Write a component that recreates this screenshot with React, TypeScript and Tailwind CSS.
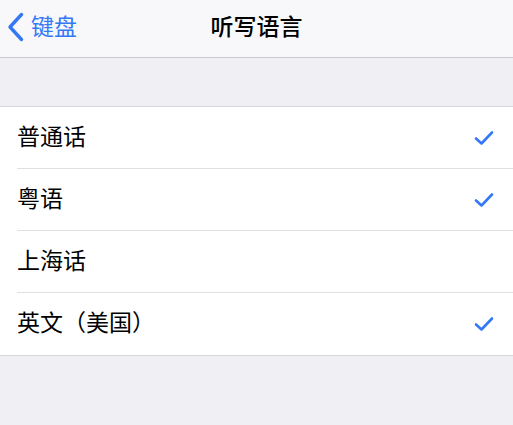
const languages = [
  { name: "普通话", checked: true },
  { name: "粤语", checked: true },
  { name: "上海话", checked: false },
  { name: "英文（美国）", checked: true },
];

function BackChevron() {
  return (
    <svg width="19" height="30" viewBox="0 0 19 30" fill="none">
      <path
        d="M15.5 2.5 L4 15 L15.5 27.5"
        stroke="#3478f6"
        strokeWidth="3.4"
        strokeLinecap="round"
        strokeLinejoin="round"
      />
    </svg>
  );
}

function Check() {
  return (
    <svg width="20" height="16" viewBox="0 0 20 16" fill="none">
      <path
        d="M2 8.5 L7.5 13.5 L18 2.5"
        stroke="#3478f6"
        strokeWidth="2.6"
        strokeLinecap="round"
        strokeLinejoin="round"
      />
    </svg>
  );
}

export default function App() {
  return (
    <div
      className="flex h-[425px] w-[513px] flex-col bg-[#efeff4] text-black"
      style={{ fontFamily: '"Noto Sans CJK SC", "Noto Sans", sans-serif' }}
    >
      <div className="relative flex h-[58px] items-center justify-center border-b border-[#c9c9ce] bg-[#f8f8fa] pb-[6px]">
        <div className="absolute left-[6px] top-0 flex h-full items-center gap-[6px] pb-[4px] text-[#3478f6]">
          <BackChevron />
          <span className="pb-[2px] text-[23px] leading-none">键盘</span>
        </div>
        <span className="text-[23px] font-medium leading-none">听写语言</span>
      </div>

      <div className="h-[48px]" />

      <div className="border-y border-[#d6d6da] bg-white">
        {languages.map((lang, i) => (
          <div key={lang.name} className="pl-[17px]">
            <div
              className={
                "flex h-[62px] items-center justify-between pr-[19px] " +
                (i < languages.length - 1 ? "border-b border-[#e0e0e4]" : "")
              }
            >
              <span className="pb-[5px] text-[23px] leading-none">{lang.name}</span>
              {lang.checked && <Check />}
            </div>
          </div>
        ))}
      </div>
    </div>
  );
}
